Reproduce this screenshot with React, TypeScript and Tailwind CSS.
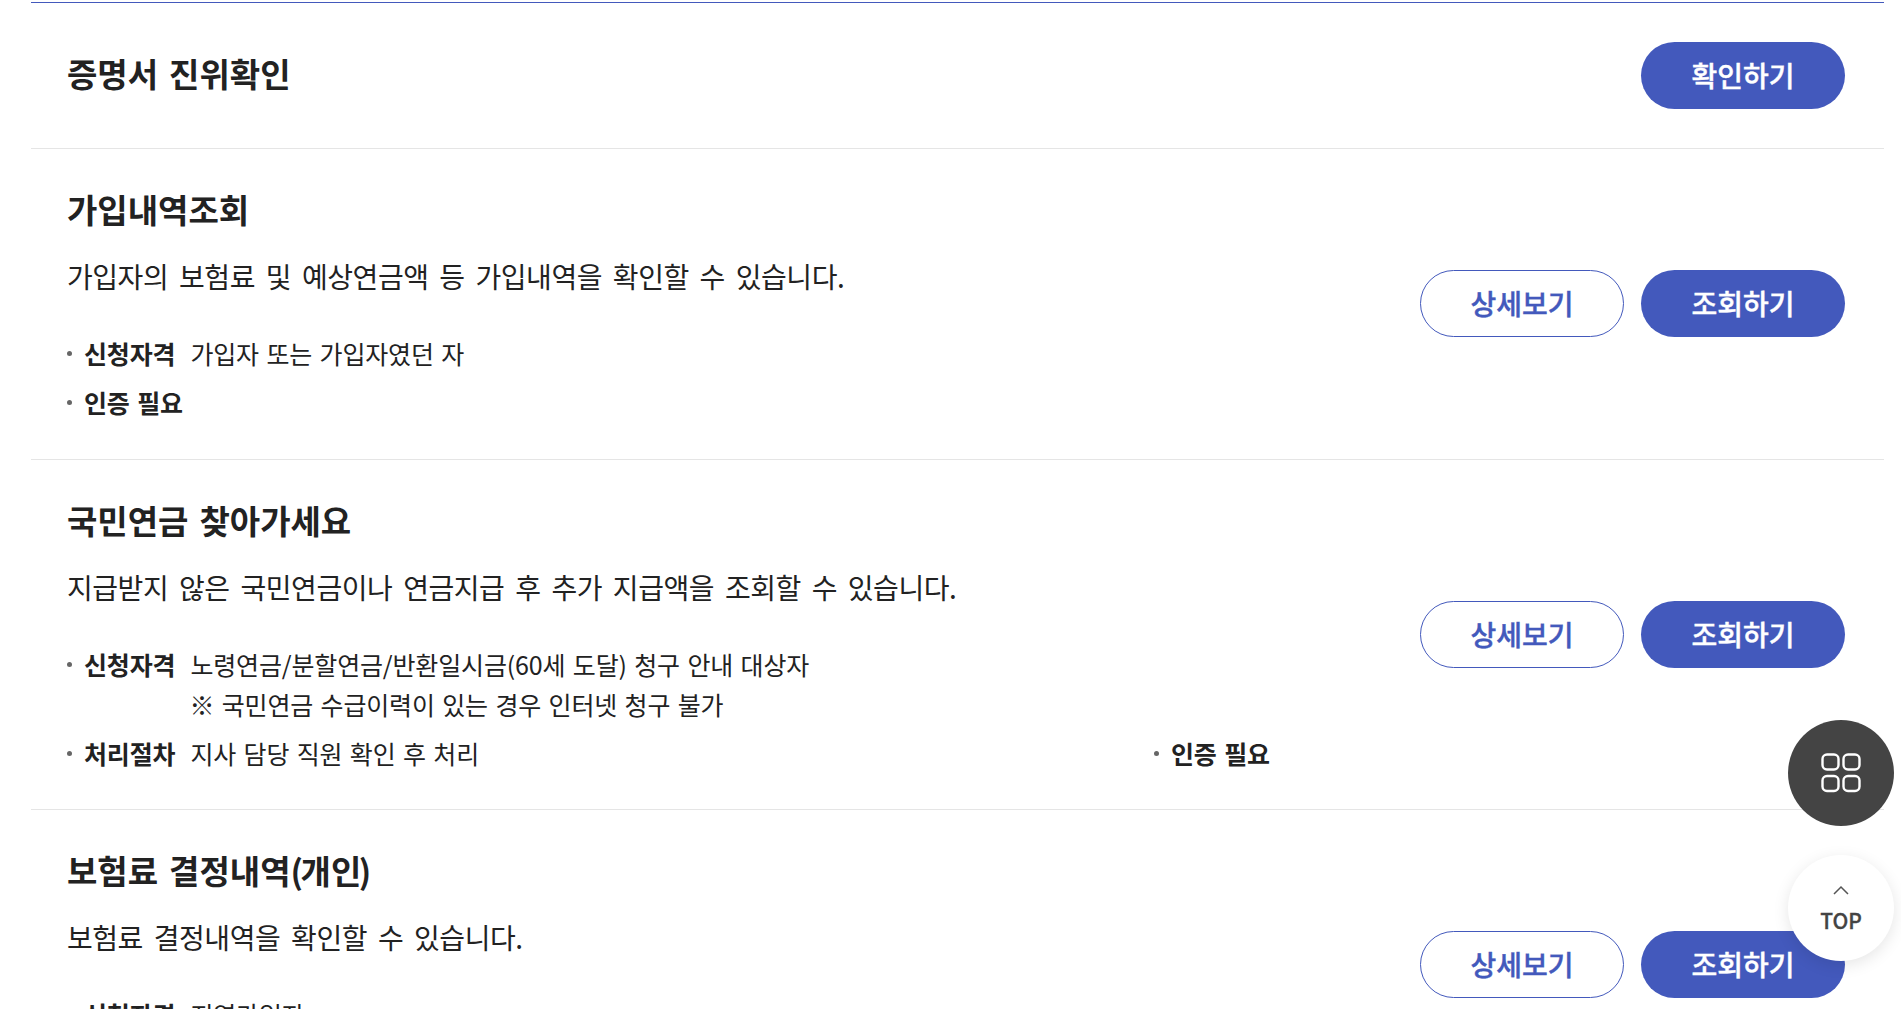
import { ReactNode } from "react";

type Meta = { label: string; text?: ReactNode };

interface RowProps {
  title: ReactNode;
  desc?: string;
  rowClass: string;
  action: string;
  detail?: boolean;
  children?: ReactNode;
}

const Bullet = ({ label, text }: Meta) => (
  <div className="flex items-start text-[25px] leading-[40px] tracking-[-0.15px] [word-spacing:2px] text-[#222]">
    <span className="mt-[18px] mr-[12px] h-[5px] w-[5px] shrink-0 rounded-full bg-[#666]" />
    <span className="shrink-0 font-bold">{label}</span>
    {text && <div className="ml-[15px]">{text}</div>}
  </div>
);

const Row = ({ title, desc, rowClass, action, detail, children }: RowProps) => (
  <li className={`flex items-center justify-between border-b border-[#e5e5e5] pl-[36px] pr-[39px] ${rowClass}`}>
    <div className="min-w-0 flex-1">
      <h3 className={`text-[33px] leading-[48px] font-bold [word-spacing:3.5px] text-[#222] ${desc ? "" : "-mt-[5px]"}`}>
        {title}
      </h3>
      {desc && (
        <p className="mt-[21px] text-[28px] leading-[44px] tracking-[-0.45px] [word-spacing:5px] text-[#222]">{desc}</p>
      )}
      {children}
    </div>
    <div className="flex shrink-0 gap-[17px]">
      {detail && (
        <button className="h-[67px] w-[204px] rounded-full border border-[#4359bc] bg-white pb-[2px] text-[28px] font-medium [-webkit-text-stroke:0.4px_#4359bc] text-[#4359bc]">
          상세보기
        </button>
      )}
      <button className="h-[67px] w-[204px] rounded-full bg-[#4359bc] pb-[2px] text-[28px] font-medium [-webkit-text-stroke:0.4px_#ffffff] text-white">
        {action}
      </button>
    </div>
  </li>
);

export default function App() {
  return (
    <div className="relative h-[1009px] overflow-hidden bg-white pt-[2px] font-['Noto_Sans_CJK_KR','Noto_Sans',sans-serif]">
      <ul className="ml-[31px] w-[1853px] border-t border-[#4359bc]">
        <Row title="증명서 진위확인" rowClass="h-[146px]" action="확인하기" />
        <Row
          title="가입내역조회"
          desc="가입자의 보험료 및 예상연금액 등 가입내역을 확인할 수 있습니다."
          rowClass="h-[309px] box-content pb-px"
          action="조회하기"
          detail
        >
          <div className="mt-[35px] flex flex-col gap-[9px]">
            <Bullet label="신청자격" text="가입자 또는 가입자였던 자" />
            <Bullet label="인증 필요" />
          </div>
        </Row>
        <Row
          title="국민연금 찾아가세요"
          desc="지급받지 않은 국민연금이나 연금지급 후 추가 지급액을 조회할 수 있습니다."
          rowClass="h-[349px] box-content"
          action="조회하기"
          detail
        >
          <div className="mt-[35px] flex flex-col gap-[9px]">
            <Bullet
              label="신청자격"
              text={
                <>
                  <p>노령연금/분할연금/반환일시금(60세 도달) 청구 안내 대상자</p>
                  <p className="-ml-px">※ 국민연금 수급이력이 있는 경우 인터넷 청구 불가</p>
                </>
              }
            />
            <div className="flex">
              <div className="w-[1087px]">
                <Bullet label="처리절차" text="지사 담당 직원 확인 후 처리" />
              </div>
              <Bullet label="인증 필요" />
            </div>
          </div>
        </Row>
        <Row
          title={
            <>
              보험료 결정내역<span className="tracking-[-2.5px]">(</span>개<span className="tracking-[-2.5px]">인</span>)
            </>
          }
          desc="보험료 결정내역을 확인할 수 있습니다."
          rowClass="h-[309px] box-content"
          action="조회하기"
          detail
        >
          <div className="mt-[35px] flex flex-col gap-[9px]">
            <Bullet label="신청자격" text="지역가입자" />
            <Bullet label="인증 필요" />
          </div>
        </Row>
      </ul>

      <button className="absolute left-[1788px] top-[720px] flex h-[106px] w-[106px] items-center justify-center rounded-full bg-[#444]">
        <svg width="40" height="40" viewBox="0 0 40 40" fill="none" stroke="#fff" strokeWidth="2.4">
          <rect x="1.5" y="1.5" width="16" height="15" rx="4.5" />
          <rect x="22.5" y="1.5" width="16" height="15" rx="4.5" />
          <rect x="1.5" y="23" width="16" height="15" rx="4.5" />
          <rect x="22.5" y="23" width="16" height="15" rx="4.5" />
        </svg>
      </button>
      <button className="absolute left-[1788px] top-[855px] flex h-[106px] w-[106px] flex-col items-center justify-center rounded-full bg-white shadow-[0_4px_16px_rgba(0,0,0,0.1)]">
        <svg width="16" height="10" viewBox="0 0 16 10" fill="none" stroke="#555" strokeWidth="1.5">
          <path d="M1 9L8 2L15 9" />
        </svg>
        <span className="mt-[13px] text-[21px] leading-[24px] font-medium [-webkit-text-stroke:0.3px_#444444] text-[#444]">TOP</span>
      </button>
    </div>
  );
}
